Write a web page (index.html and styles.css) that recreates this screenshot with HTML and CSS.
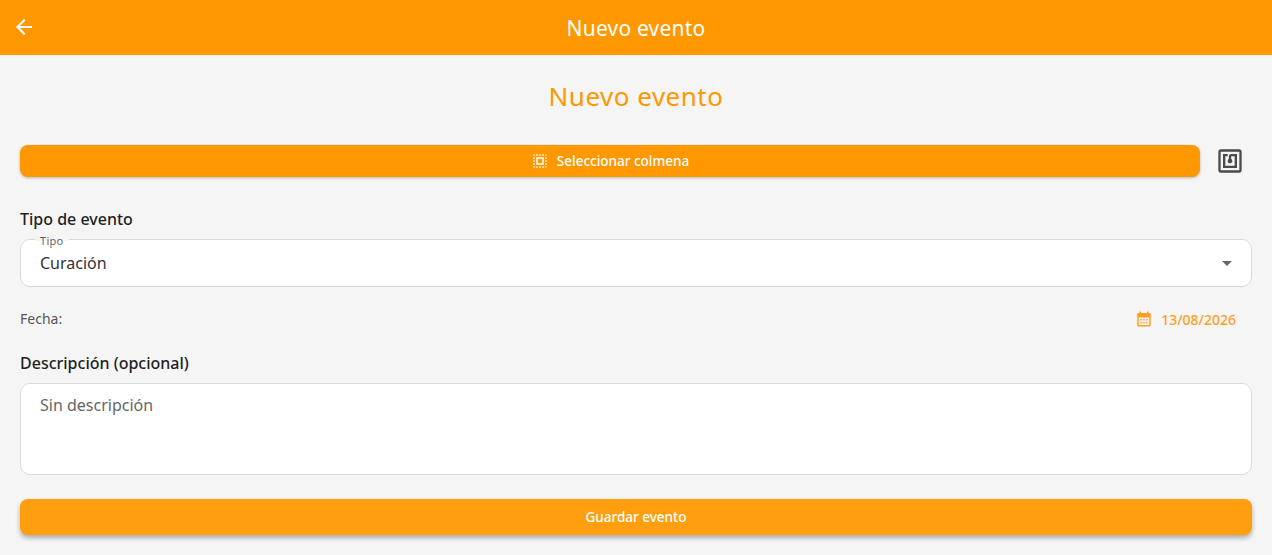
FILE: index.html
```html
<!DOCTYPE html>
<html>
  <head>
    <link rel="stylesheet" href="styles.css">
  </head>
  <body>
    <header class="appbar">
      <svg class="back" viewBox="0 0 24 24"><path d="M20 11H7.830l5.590-5.590L12 4l-8 8 8 8 1.410-1.410L7.830 13H20z"/></svg>
      <span class="appbar-title">Nuevo evento</span>
    </header>
    <main class="content">
      <h1 class="page-title">Nuevo evento</h1>
      <div class="hive-row">
        <button class="btn btn-hive">
          <svg class="btn-icon" viewBox="0 0 24 24"><path d="M3 5h2V3c-1.100 0-2 .9-2 2zm0 8h2v-2H3v2zm4 8h2v-2H7v2zM3 9h2V7H3v2zm10-6h-2v2h2V3zm6 0v2h2c0-1.100-.9-2-2-2zM5 21v-2H3c0 1.100.9 2 2 2zm-2-4h2v-2H3v2zM9 3H7v2h2V3zm2 18h2v-2h-2v2zm8-8h2v-2h-2v2zm0 8c1.100 0 2-.9 2-2h-2v2zm0-12h2V7h-2v2zm0 8h2v-2h-2v2zm-4 4h2v-2h-2v2zm0-16h2V3h-2v2zM7 17h10V7H7v10zm2-8h6v6H9V9z"/></svg>
          Seleccionar colmena
        </button>
        <svg class="nfc" viewBox="0 0 24 24"><path d="M20 2H4c-1.100 0-2 .9-2 2v16c0 1.100.9 2 2 2h16c1.100 0 2-.9 2-2V4c0-1.100-.9-2-2-2zm0 18H4V4h16v16zM18 6h-5c-1.100 0-2 .9-2 2v2.280c-.6.350-1 .98-1 1.720 0 1.100.9 2 2 2s2-.9 2-2c0-.74-.4-1.380-1-1.720V8h3v8H8V8h2V6H6v12h12V6z"/></svg>
      </div>
      <h2 class="section-label">Tipo de evento</h2>
      <div class="field">
        <span class="field-legend">Tipo</span>
        <span class="field-value">Curación</span>
        <span class="caret"></span>
      </div>
      <div class="date-row">
        <span class="date-label">Fecha:</span>
        <span class="date-value">
          <svg class="cal" viewBox="0 0 24 24"><path d="M19 4h-1V2h-2v2H8V2H6v2H5c-1.110 0-1.990.9-1.990 2L3 20c0 1.100.89 2 2 2h14c1.100 0 2-.9 2-2V6c0-1.100-.9-2-2-2zm0 16H5V10h14v10zM9 14H7v-2h2v2zm4 0h-2v-2h2v2zm4 0h-2v-2h2v2zm-8 4H7v-2h2v2zm4 0h-2v-2h2v2zm4 0h-2v-2h2v2z"/></svg>
          13/08/2026
        </span>
      </div>
      <h2 class="section-label section-desc">Descripción (opcional)</h2>
      <div class="textarea">Sin descripción</div>
      <button class="btn btn-save">Guardar evento</button>
    </main>
  </body>
</html>
```

FILE: styles.css
```css
* {
  box-sizing: border-box;
}

body {
  margin: 0;
  min-height: 100vh;
  background: #f5f5f5;
  font-family: "Noto Sans", "Open Sans", sans-serif;
  color: #1d1b20;
  overflow: hidden;
}

.appbar {
  height: 55px;
  background: #ff9800;
  display: flex;
  align-items: center;
  justify-content: center;
  position: relative;
  color: #fff;
}

.back {
  position: absolute;
  left: 12px;
  top: 15px;
  width: 24px;
  height: 24px;
  fill: #fff;
}

.appbar-title {
  font-size: 21px;
  letter-spacing: 0.2px;
  line-height: 54px;
}

.content {
  padding: 0 20px;
  display: flex;
  flex-direction: column;
}

.page-title {
  margin: 23px 0 0;
  height: 36px;
  line-height: 36px;
  font-size: 26px;
  font-weight: 400;
  letter-spacing: 0.5px;
  text-align: center;
  color: #ff9800;
}

.hive-row {
  margin-top: 31px;
  display: flex;
  align-items: center;
  gap: 16px;
}

.btn {
  border: 0;
  color: #fff;
  font-family: inherit;
  font-size: 13.500px;
  font-weight: 500;
  display: flex;
  align-items: center;
  justify-content: center;
  gap: 8px;
  background: #ff9800;
}

.btn-hive {
  flex: 1;
  height: 32px;
  border-radius: 8px;
  box-shadow: 0 1px 3px rgba(0, 0, 0, 0.25);
}

.btn-icon {
  width: 18px;
  height: 18px;
  fill: #fff;
}

.nfc {
  width: 28px;
  height: 28px;
  margin-right: 8px;
  fill: #4a4a4a;
}

.section-label {
  margin: 0;
  font-size: 16px;
  font-weight: 500;
  line-height: 20px;
  color: #1f1f1f;
}

.hive-row + .section-label {
  margin-top: 32px;
}

.field {
  margin-top: 10px;
  height: 48px;
  background: #fff;
  border: 1px solid #d9d9d9;
  border-radius: 10px;
  position: relative;
  display: flex;
  align-items: center;
  padding: 0 19px;
}

.field-legend {
  position: absolute;
  left: 14px;
  top: -5px;
  padding: 0 5px;
  font-size: 11px;
  line-height: 12px;
  letter-spacing: 0.3px;
  color: #666;
  background: linear-gradient(#f5f5f5 50%, #fff 50%);
}

.field-value {
  font-size: 16px;
  color: #333;
}

.caret {
  position: absolute;
  right: 19px;
  top: 21px;
  border-left: 5px solid transparent;
  border-right: 5px solid transparent;
  border-top: 5px solid #666;
}

.date-row {
  margin-top: 22px;
  height: 20px;
  display: flex;
  align-items: center;
  justify-content: space-between;
  padding-right: 16px;
}

.date-label {
  font-size: 14px;
  line-height: 18px;
  margin-bottom: 1px;
  color: #555;
}

.date-value {
  display: flex;
  align-items: center;
  gap: 8px;
  font-size: 14px;
  font-weight: 500;
  color: #ff9f22;
}

.cal {
  width: 18px;
  height: 18px;
  fill: #ff9f22;
}

.section-desc {
  margin-top: 24px;
}

.textarea {
  margin-top: 10px;
  height: 92px;
  background: #fff;
  border: 1px solid #d9d9d9;
  border-radius: 10px;
  padding: 11px 19px;
  font-size: 16px;
  line-height: 20px;
  color: #666;
}

.btn-save {
  margin-top: 24px;
  height: 36px;
  border-radius: 8px;
  background: #ff9f0f;
  box-shadow: 0 3px 5px rgba(0, 0, 0, 0.3);
}
```
